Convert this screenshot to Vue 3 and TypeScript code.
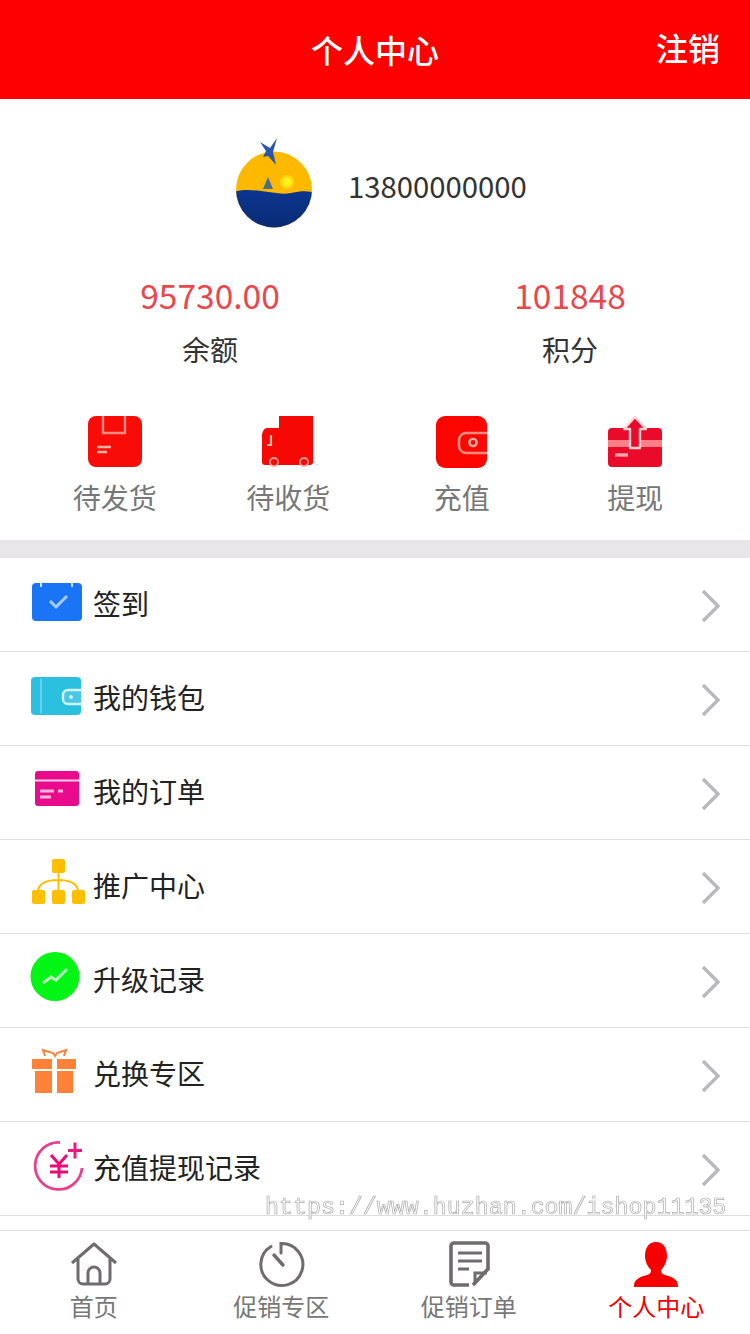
<template>
  <div class="page">
    <header class="top-bar">
      <span class="top-title">个人中心</span>
      <span class="top-logout">注销</span>
    </header>

    <section class="profile">
      <div class="user-row">
        <svg class="avatar" viewBox="0 0 80 96" width="80" height="96">
          <defs>
            <linearGradient id="sea" x1="0" y1="0" x2="0" y2="1">
              <stop offset="0" stop-color="#0b3590" />
              <stop offset="1" stop-color="#0a2a70" />
            </linearGradient>
            <clipPath id="ball"><circle cx="41" cy="54.5" r="38" /></clipPath>
          </defs>
          <circle cx="41" cy="54.5" r="38" fill="#fdb900" />
          <g clip-path="url(#ball)">
            <path d="M0 57c10-3 18-2 28-1s20 4 30 2 14-2 22-1v42H0z" fill="url(#sea)" />
          </g>
          <circle cx="54" cy="47" r="7" fill="#ffd90f" />
          <circle cx="54" cy="47" r="4" fill="#fff21a" />
          <path d="M30 54l5-12 5 12z" fill="#4a6f8e" />
          <path d="M27 7l10 6 7-10-4 14 3 13-8-9-5 1 3-6z" fill="#2a58a8" />
        </svg>
        <span class="phone">13800000000</span>
      </div>

      <div class="stats">
        <div v-for="stat in stats" :key="stat.label" class="stat">
          <span class="stat-value">{{ stat.value }}</span>
          <span class="stat-label">{{ stat.label }}</span>
        </div>
      </div>

      <div class="shortcuts">
        <div v-for="item in shortcuts" :key="item.label" class="shortcut">
          <svg viewBox="0 0 54 54" width="54" height="54">
            <template v-if="item.icon === 'box'">
              <rect x="0" y="1" width="54" height="51" rx="8" fill="#f80c08" />
              <path d="M15 1v17h22V1" fill="none" stroke="#ff8a80" stroke-width="2.4" />
              <path d="M9 32h14M9 37h10" stroke="#ffb0a8" stroke-width="2.6" />
            </template>
            <template v-else-if="item.icon === 'truck'">
              <path d="M18 1h34v45H18z" fill="#f60804" />
              <path d="M6 13h12v36H5a4 4 0 0 1-4-4V21c0-4 2-8 5-8z" fill="#f60804" />
              <path d="M10 20v10H6" fill="none" stroke="#ffb0a8" stroke-width="2.2" />
              <path d="M1 42h51v5a3 3 0 0 1-3 3H4a3 3 0 0 1-3-3z" fill="#f60804" />
              <circle cx="13" cy="47" r="4" fill="#f60804" stroke="#ff9c94" stroke-width="1.8" />
              <circle cx="43" cy="47" r="4" fill="#f60804" stroke="#ff9c94" stroke-width="1.8" />
            </template>
            <template v-else-if="item.icon === 'wallet'">
              <rect x="1" y="1" width="51" height="52" rx="9" fill="#fc0500" />
              <path d="M52 18H31a7 7 0 0 0-7 7v6a7 7 0 0 0 7 7h21" fill="#f80a04" stroke="#ff8a80" stroke-width="2.6" />
              <circle cx="38" cy="27.5" r="3.6" fill="none" stroke="#ffb0a8" stroke-width="2.4" />
            </template>
            <template v-else>
              <path d="M0 17a4 4 0 0 1 4-4h46a4 4 0 0 1 4 4v31a4 4 0 0 1-4 4H4a4 4 0 0 1-4-4z" fill="#ea0a2a" />
              <path d="M0 25h54v7H0z" fill="#ff7f86" />
              <path d="M7 40h13" stroke="#ffa6ab" stroke-width="3.4" />
              <path d="M27 2L38 14h-6v19H22V14h-6z" fill="#ea0a2a" stroke="#ffd3d6" stroke-width="2.4" stroke-linejoin="round" />
            </template>
          </svg>
          <span class="shortcut-label">{{ item.label }}</span>
        </div>
      </div>
    </section>

    <div class="divider"></div>

    <ul class="menu">
      <li v-for="row in menu" :key="row.label" class="menu-row">
        <svg class="menu-icon" viewBox="0 0 56 56" width="56" height="56">
          <template v-if="row.icon === 'calendar'">
            <rect x="4" y="6" width="50" height="38" rx="4" fill="#1a74f6" />
            <path d="M13 6v4M44 6v4" stroke="#cfe2fd" stroke-width="2" />
            <path d="M22 24l6 6 11-11" fill="none" stroke="#a9cdfb" stroke-width="3" />
          </template>
          <template v-else-if="row.icon === 'wallet'">
            <rect x="3" y="6" width="50" height="38" rx="4" fill="#2bbfe0" />
            <path d="M13 8v34" stroke="#7fdbee" stroke-width="1.4" />
            <path d="M53 19H40a5 5 0 0 0-5 5v4a5 5 0 0 0 5 5h13" fill="#48c8e4" stroke="#d3f3fa" stroke-width="2.4" />
            <circle cx="43" cy="26" r="2" fill="#d3f3fa" />
          </template>
          <template v-else-if="row.icon === 'card'">
            <rect x="7" y="6" width="44" height="35" rx="3" fill="#ea0a8c" />
            <path d="M7 15.500h44" stroke="#fbd0e7" stroke-width="2" />
            <path d="M12 26h14M12 32h11M30 26h5" stroke="#f9b4d9" stroke-width="3" />
          </template>
          <template v-else-if="row.icon === 'network'">
            <rect x="24" y="0" width="13" height="14" rx="2" fill="#ffbf00" />
            <rect x="4" y="31" width="13" height="14" rx="2" fill="#ffbf00" />
            <rect x="24" y="31" width="13" height="14" rx="2" fill="#ffbf00" />
            <rect x="44" y="31" width="13" height="14" rx="2" fill="#ffbf00" />
            <path d="M30.500 14v17M10 31c2-8 10-10 20-10s18 2 20 10" fill="none" stroke="#ffbf00" stroke-width="2" />
          </template>
          <template v-else-if="row.icon === 'trend'">
            <circle cx="27" cy="23.500" r="24.500" fill="#02f514" />
            <path d="M15 30l8-6 5 3 11-11" fill="none" stroke="#b6fcc0" stroke-width="3" />
          </template>
          <template v-else-if="row.icon === 'gift'">
            <path d="M4 12h20v10H4zM29 12h19v10H29zM7 24h17v22H7zM29 24h16v22H29z" fill="#ff8238" />
            <path d="M17 9l-2-6 10 3 2 3 2-3 9-3-2 6" fill="none" stroke="#ff8238" stroke-width="2" />
          </template>
          <template v-else>
            <path d="M32 1.500A23.500 23.500 0 1 0 54 27" fill="none" stroke="#e8408e" stroke-width="2.8" />
            <path d="M23 14l8 9 8-9M22 25h18M22 31h18M31 23v14" fill="none" stroke="#ec0a78" stroke-width="3" />
            <path d="M47 1.500v16M40 9.500h14" stroke="#ec1a80" stroke-width="3" />
          </template>
        </svg>
        <span class="menu-label">{{ row.label }}</span>
        <svg class="chevron" viewBox="0 0 20 34" width="20" height="34">
          <path d="M2 2l15 15L2 32" fill="none" stroke="#b9b9bd" stroke-width="3.4" />
        </svg>
      </li>
    </ul>

    <nav class="tab-bar">
      <div v-for="tab in tabs" :key="tab.label" class="tab" :class="{ 'tab-active': tab.active }">
        <svg viewBox="0 0 48 48" width="48" height="48">
          <template v-if="tab.icon === 'home'">
            <path d="M2 22L24 3l22 19M8 18v20a5 5 0 0 0 5 5h22a5 5 0 0 0 5-5V18" fill="none" stroke="#6f6b6e" stroke-width="3" stroke-linejoin="round" />
            <path d="M18 43V32a6 6 0 0 1 12 0v11" fill="none" stroke="#6f6b6e" stroke-width="3" />
          </template>
          <template v-else-if="tab.icon === 'clock'">
            <path d="M14 5.500A21 21 0 1 0 24 2.500V12" fill="none" stroke="#6f6b6e" stroke-width="3" stroke-linecap="round" />
            <path d="M17 14l9 10" stroke="#6f6b6e" stroke-width="3.400" stroke-linecap="round" />
            <path d="M27 40c5-1 9-4 11-9" fill="none" stroke="#fff" stroke-width="1.200" />
          </template>
          <template v-else-if="tab.icon === 'doc'">
            <path d="M24 44H9a3 3 0 0 1-3-3V5a3 3 0 0 1 3-3h31a3 3 0 0 1 3 3v23L28 44" fill="none" stroke="#6f6b6e" stroke-width="3.600" />
            <path d="M13 12h24M13 20h24M13 28h11" stroke="#6f6b6e" stroke-width="3" />
            <path d="M30 43V32h12" fill="none" stroke="#6f6b6e" stroke-width="3" />
          </template>
          <template v-else>
            <path d="M24 1c8 0 11 7 11 14 0 6-3 11-6 14 0 3 1 4 4 5 7 2 13 4 13 11v1H2v-1c0-7 6-9 13-11 3-1 4-2 4-5-3-3-6-8-6-14C13 8 16 1 24 1z" fill="#f60000" />
          </template>
        </svg>
        <span class="tab-label">{{ tab.label }}</span>
      </div>
    </nav>

    <span class="watermark">https://www.huzhan.com/ishop11135</span>
  </div>
</template>

<script setup lang="ts">
interface Stat {
  value: string
  label: string
}

interface Entry {
  label: string
  icon: string
  active?: boolean
}

const stats: Stat[] = [
  { value: '95730.00', label: '余额' },
  { value: '101848', label: '积分' }
]

const shortcuts: Entry[] = [
  { label: '待发货', icon: 'box' },
  { label: '待收货', icon: 'truck' },
  { label: '充值', icon: 'wallet' },
  { label: '提现', icon: 'withdraw' }
]

const menu: Entry[] = [
  { label: '签到', icon: 'calendar' },
  { label: '我的钱包', icon: 'wallet' },
  { label: '我的订单', icon: 'card' },
  { label: '推广中心', icon: 'network' },
  { label: '升级记录', icon: 'trend' },
  { label: '兑换专区', icon: 'gift' },
  { label: '充值提现记录', icon: 'record' }
]

const tabs: Entry[] = [
  { label: '首页', icon: 'home' },
  { label: '促销专区', icon: 'clock' },
  { label: '促销订单', icon: 'doc' },
  { label: '个人中心', icon: 'user', active: true }
]
</script>

<style scoped>
.page {
  position: relative;
  width: 750px;
  height: 1334px;
  overflow: hidden;
  background: #fff;
  font-family: "Noto Sans CJK SC", "Noto Sans", sans-serif;
  color: #222;
}

.top-bar {
  position: relative;
  height: 99px;
  padding-bottom: 2px;
  box-sizing: border-box;
  display: flex;
  align-items: center;
  justify-content: center;
  background: #f00;
  color: #fff;
  font-size: 32px;
  font-weight: 500;
}

.top-logout {
  position: absolute;
  right: 30px;
  top: 24px;
  line-height: 46px;
}

.profile {
  height: 441px;
  padding-top: 36px;
  box-sizing: border-box;
}

.user-row {
  display: flex;
  align-items: center;
  padding-left: 233px;
  height: 96px;
}

.phone {
  margin-left: 35px;
  padding-top: 4px;
  font-size: 29.300px;
  color: #333;
}

.stats {
  display: flex;
  margin-top: 40px;
  padding-left: 30px;
}

.stat {
  flex: 1;
  display: flex;
  flex-direction: column;
  align-items: center;
}

.stat-value {
  font-size: 33.500px;
  line-height: 48px;
  color: #e8484c;
}

.stat-label {
  margin-top: 6px;
  font-size: 28px;
  line-height: 48px;
  color: #333;
}

.shortcuts {
  display: grid;
  grid-template-columns: repeat(4, 1fr);
  margin-top: 42px;
  padding: 0 28px;
}

.shortcut {
  display: flex;
  flex-direction: column;
  align-items: center;
}

.shortcut-label {
  margin-top: 4px;
  font-size: 28px;
  line-height: 48px;
  color: #777;
}

.divider {
  height: 18px;
  background: #e8e6e8;
}

.menu {
  margin: 0;
  padding: 0;
  list-style: none;
}

.menu-row {
  display: flex;
  align-items: center;
  height: 93px;
  padding: 0 28px;
  border-bottom: 1px solid #dedede;
}

.menu-icon {
  flex: none;
  overflow: visible;
}

.menu-label {
  flex: 1;
  margin-left: 9px;
  margin-bottom: 4px;
  font-size: 28px;
  color: #222;
}

.chevron {
  flex: none;
  margin-top: 2px;
  margin-right: 1px;
}

.tab-bar {
  display: grid;
  grid-template-columns: repeat(4, 1fr);
  margin-top: 14px;
  padding-top: 10px;
  border-top: 1px solid #dedede;
}

.tab {
  display: flex;
  flex-direction: column;
  align-items: center;
  color: #777;
}

.tab-label {
  font-size: 24px;
  line-height: 34px;
}

.tab-active {
  color: #f60000;
}

.watermark {
  position: absolute;
  left: 265px;
  top: 1194px;
  font-family: "Liberation Mono", monospace;
  font-size: 23.300px;
  line-height: 28px;
  white-space: nowrap;
  color: #fff;
  -webkit-text-stroke: 0.7px #aaa;
  will-change: transform;
}
</style>
